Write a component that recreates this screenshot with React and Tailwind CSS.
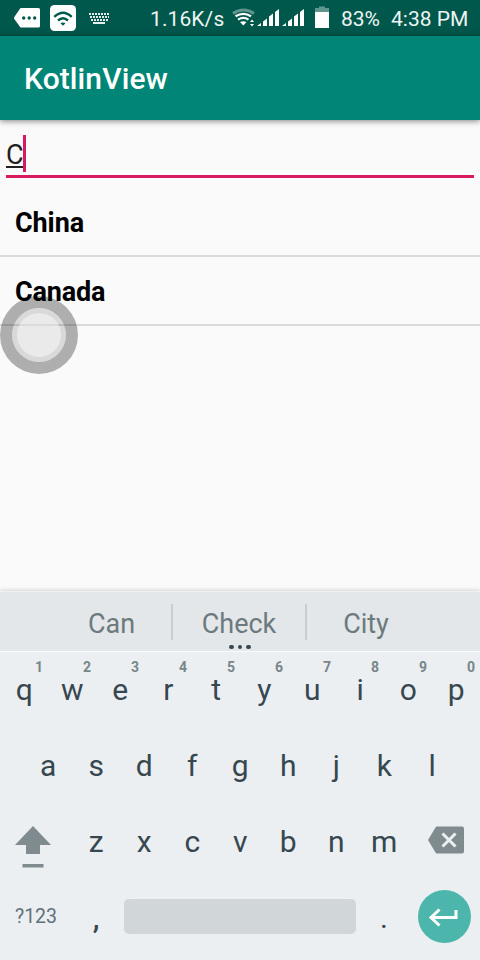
const row1 = ["q", "w", "e", "r", "t", "y", "u", "i", "o", "p"];
const row2 = ["a", "s", "d", "f", "g", "h", "j", "k", "l"];
const row3 = ["z", "x", "c", "v", "b", "n", "m"];

function Key({ label, hint }) {
  return (
    <div className="relative flex h-[76px] w-12 shrink-0 items-center justify-center">
      {hint && (
        <span className="absolute top-[7px] right-[5px] text-[14px] leading-[16px] font-bold text-[#78868a]">{hint}</span>
      )}
      <span className="pl-[0.5px] text-[30px] leading-[76px]">{label}</span>
    </div>
  );
}

function StatusBar() {
  return (
    <div className="flex h-9 items-center bg-[#00574b] text-[21px] leading-[36px] text-[#eef5f4]">
      <svg className="h-9 w-[150px] shrink-0" viewBox="0 0 150 36">
        <path d="M20.5 8H38.5Q40 8 40 9.5V26Q40 27.5 38.5 27.5H20.5L14.3 19Q13.8 18 14.3 17Z" fill="#fff" />
        <circle cx="23.7" cy="18" r="1.7" fill="#00574b" />
        <circle cx="29.2" cy="18" r="1.7" fill="#00574b" />
        <circle cx="34.7" cy="18" r="1.7" fill="#00574b" />
        <rect x="50" y="5" width="26" height="26" rx="4.5" fill="#fff" />
        <g fill="none" stroke="#00574b" strokeWidth="2.4">
          <path d="M54.3 16.8Q63 8.5 71.7 16.8" />
          <path d="M58 20.5Q63 16 68 20.5" />
        </g>
        <path d="M60.5 23.3Q63 21.8 65.5 23.3L63 25.8Z" fill="#00574b" />
        <g stroke="#e2eeec" strokeWidth="2" fill="none">
          <path d="M89 14H109" strokeDasharray="2 1" />
          <path d="M90 17H109" strokeDasharray="2 1" />
          <path d="M91 20H108" strokeDasharray="2 1" />
          <path d="M93 23H105" />
        </g>
      </svg>
      <span className="w-[82px] shrink-0 pt-[2px] tracking-[0.1px]">1.16K/s</span>
      <svg className="h-9 w-[109px] shrink-0" viewBox="232 0 109 36">
        <path d="M233 13.5Q243.5 6.5 254 13.5" fill="none" stroke="#5e958c" strokeWidth="3" />
        <path d="M235.5 16.3Q243.5 11.3 251 16.3" fill="none" stroke="#fff" strokeWidth="2.3" />
        <path d="M238 19.6Q243.5 16.3 248.5 19.6" fill="none" stroke="#fff" strokeWidth="2.2" />
        <path d="M240 22Q243.3 20.5 246.5 22L243.3 25.5Z" fill="#fff" />
        <path d="M250 22L252 19.5L254 22ZM250 24L252 26.5L254 24Z" fill="#fff" />
        <g fill="#fff">
          <path d="M257 26L261 23V26ZM263 21.5L267 18.5V26H263ZM269 16.5L273 13.5V26H269ZM275 12L279 9V26H275Z" />
          <path d="M282 26L286 23V26ZM288 21.5L292 18.5V26H288ZM294 16.5L298 13.5V26H294ZM300 12L304 9V26H300Z" />
        </g>
        <path d="M319 6.5H325V8H329V12H315V8H319Z" fill="#5e958c" />
        <rect x="315" y="12" width="14" height="16" fill="#fff" />
      </svg>
      <span className="w-[50px] shrink-0 pt-[2px] tracking-[-0.1px]">83%</span>
      <span className="shrink-0 pt-[2px]">4:38 PM</span>
    </div>
  );
}

export default function App() {
  return (
    <div className="relative flex h-[960px] w-[480px] flex-col overflow-hidden bg-[#fafafa] font-['Roboto',sans-serif] whitespace-nowrap">
      <StatusBar />
      <header className="flex h-[84px] shrink-0 items-center bg-[#008577] pt-[2px] pl-6 shadow-[0_1px_6px_rgba(0,0,0,0.5)]">
        <h1 className="text-[30px] leading-[40px] font-medium tracking-[0.1px] text-white">KotlinView</h1>
      </header>
      <div className="mx-1.5 flex h-[58px] shrink-0 border-b-[3px] border-[#d81b60] pt-[15px]">
        <div className="relative h-[37px] w-[17px] text-[27px] leading-[41px] text-[#212121]">
          C
          <div className="absolute top-[31px] left-0 h-[2px] w-[18px] bg-[#212121]" />
        </div>
        <div className="relative h-[37px] w-[3px] bg-[#d81b60]" />
      </div>
      <div className="mt-[9px] h-[70px] shrink-0 border-b-2 border-[#dadada] pl-[15px] text-[27px] leading-[72px] font-bold tracking-[-0.1px] text-black">China</div>
      <div className="h-[69px] shrink-0 border-b-2 border-[#dadada] pl-[15px] text-[27px] leading-[70px] font-bold tracking-[-0.2px] text-black">Canada</div>
      <div className="absolute top-[296px] left-0 flex h-[78px] w-[78px] items-center justify-center rounded-full border-[12px] border-black/30 bg-black/13 bg-clip-padding">
        <div className="h-11 w-11 rounded-full bg-white/45" />
      </div>
      <div className="flex-1" />
      <div className="flex h-[369px] shrink-0 flex-col bg-[#ebeff2] text-[#37474f] shadow-[0_-1px_4px_rgba(0,0,0,0.15)]">
        <div className="relative flex h-[61px] shrink-0 items-center border-t border-b border-t-[#eff1f3] border-b-[#f8fafb] bg-[#e3e7ea] pl-[52px] text-[27px] leading-[60px] text-[#6c7a7e]">
          <span className="w-[119px] pt-[4px] text-center">Can</span>
          <div className="h-9 w-[2px] bg-[#c8cdd0]" />
          <span className="w-[132px] pt-[4px] text-center">Check</span>
          <div className="h-9 w-[2px] bg-[#c8cdd0]" />
          <span className="w-[118px] pt-[4px] text-center">City</span>
          <div className="absolute top-[52.5px] left-[229px] flex gap-[4px]">
            <i className="h-[4.5px] w-[4.5px] rounded-full bg-[#37474f]" />
            <i className="h-[4.5px] w-[4.5px] rounded-full bg-[#37474f]" />
            <i className="h-[4.5px] w-[4.5px] rounded-full bg-[#37474f]" />
          </div>
        </div>
        <div className="flex">
          {row1.map((key, i) => <Key key={key} label={key} hint={String((i + 1) % 10)} />)}
        </div>
        <div className="flex justify-center">
          {row2.map((key) => <Key key={key} label={key} />)}
        </div>
        <div className="flex">
          <svg className="h-[76px] w-[72px]" viewBox="0 804 72 76" fill="#808b8f">
            <path d="M33 826L51 845H40V854H26V845H15Z" />
            <rect x="22.5" y="864" width="21" height="3.5" />
          </svg>
          {row3.map((key) => <Key key={key} label={key} />)}
          <svg className="h-[76px] w-[72px]" viewBox="408 804 72 76">
            <path d="M437 826.5H462Q464 826.5 464 828.5V851.5Q464 853.5 462 853.5H437Q436 853.5 435.5 852.5L428 840L435.5 827.5Q436 826.5 437 826.5Z" fill="#808b8f" />
            <path d="M442.5 833.5L455.5 846.5M455.5 833.5L442.5 846.5" stroke="#ebeff2" strokeWidth="3" />
          </svg>
        </div>
        <div className="-mt-[2px] flex h-[76px] items-center">
          <span className="w-[72px] pt-[2px] text-center text-[19.5px] leading-[76px] text-[#62727a]">?123</span>
          <span className="w-12 pt-[3px] text-center text-[30px] leading-[76px] font-medium">,</span>
          <div className="mx-1 h-[35px] w-[232px] rounded-[5px] bg-[#d1d6d9]" />
          <span className="w-12 pt-[3px] text-center text-[30px] leading-[76px]">.</span>
          <div className="ml-[10px] flex h-[53px] w-[53px] items-center justify-center rounded-full bg-[#4db6ac]">
            <svg className="h-[53px] w-[53px]" viewBox="418 890 53 53" fill="none" stroke="#fff" strokeWidth="3">
              <path d="M456 910V917.5H431M439.5 909.5L431 917.5L439.5 925.5" />
            </svg>
          </div>
        </div>
      </div>
    </div>
  );
}
